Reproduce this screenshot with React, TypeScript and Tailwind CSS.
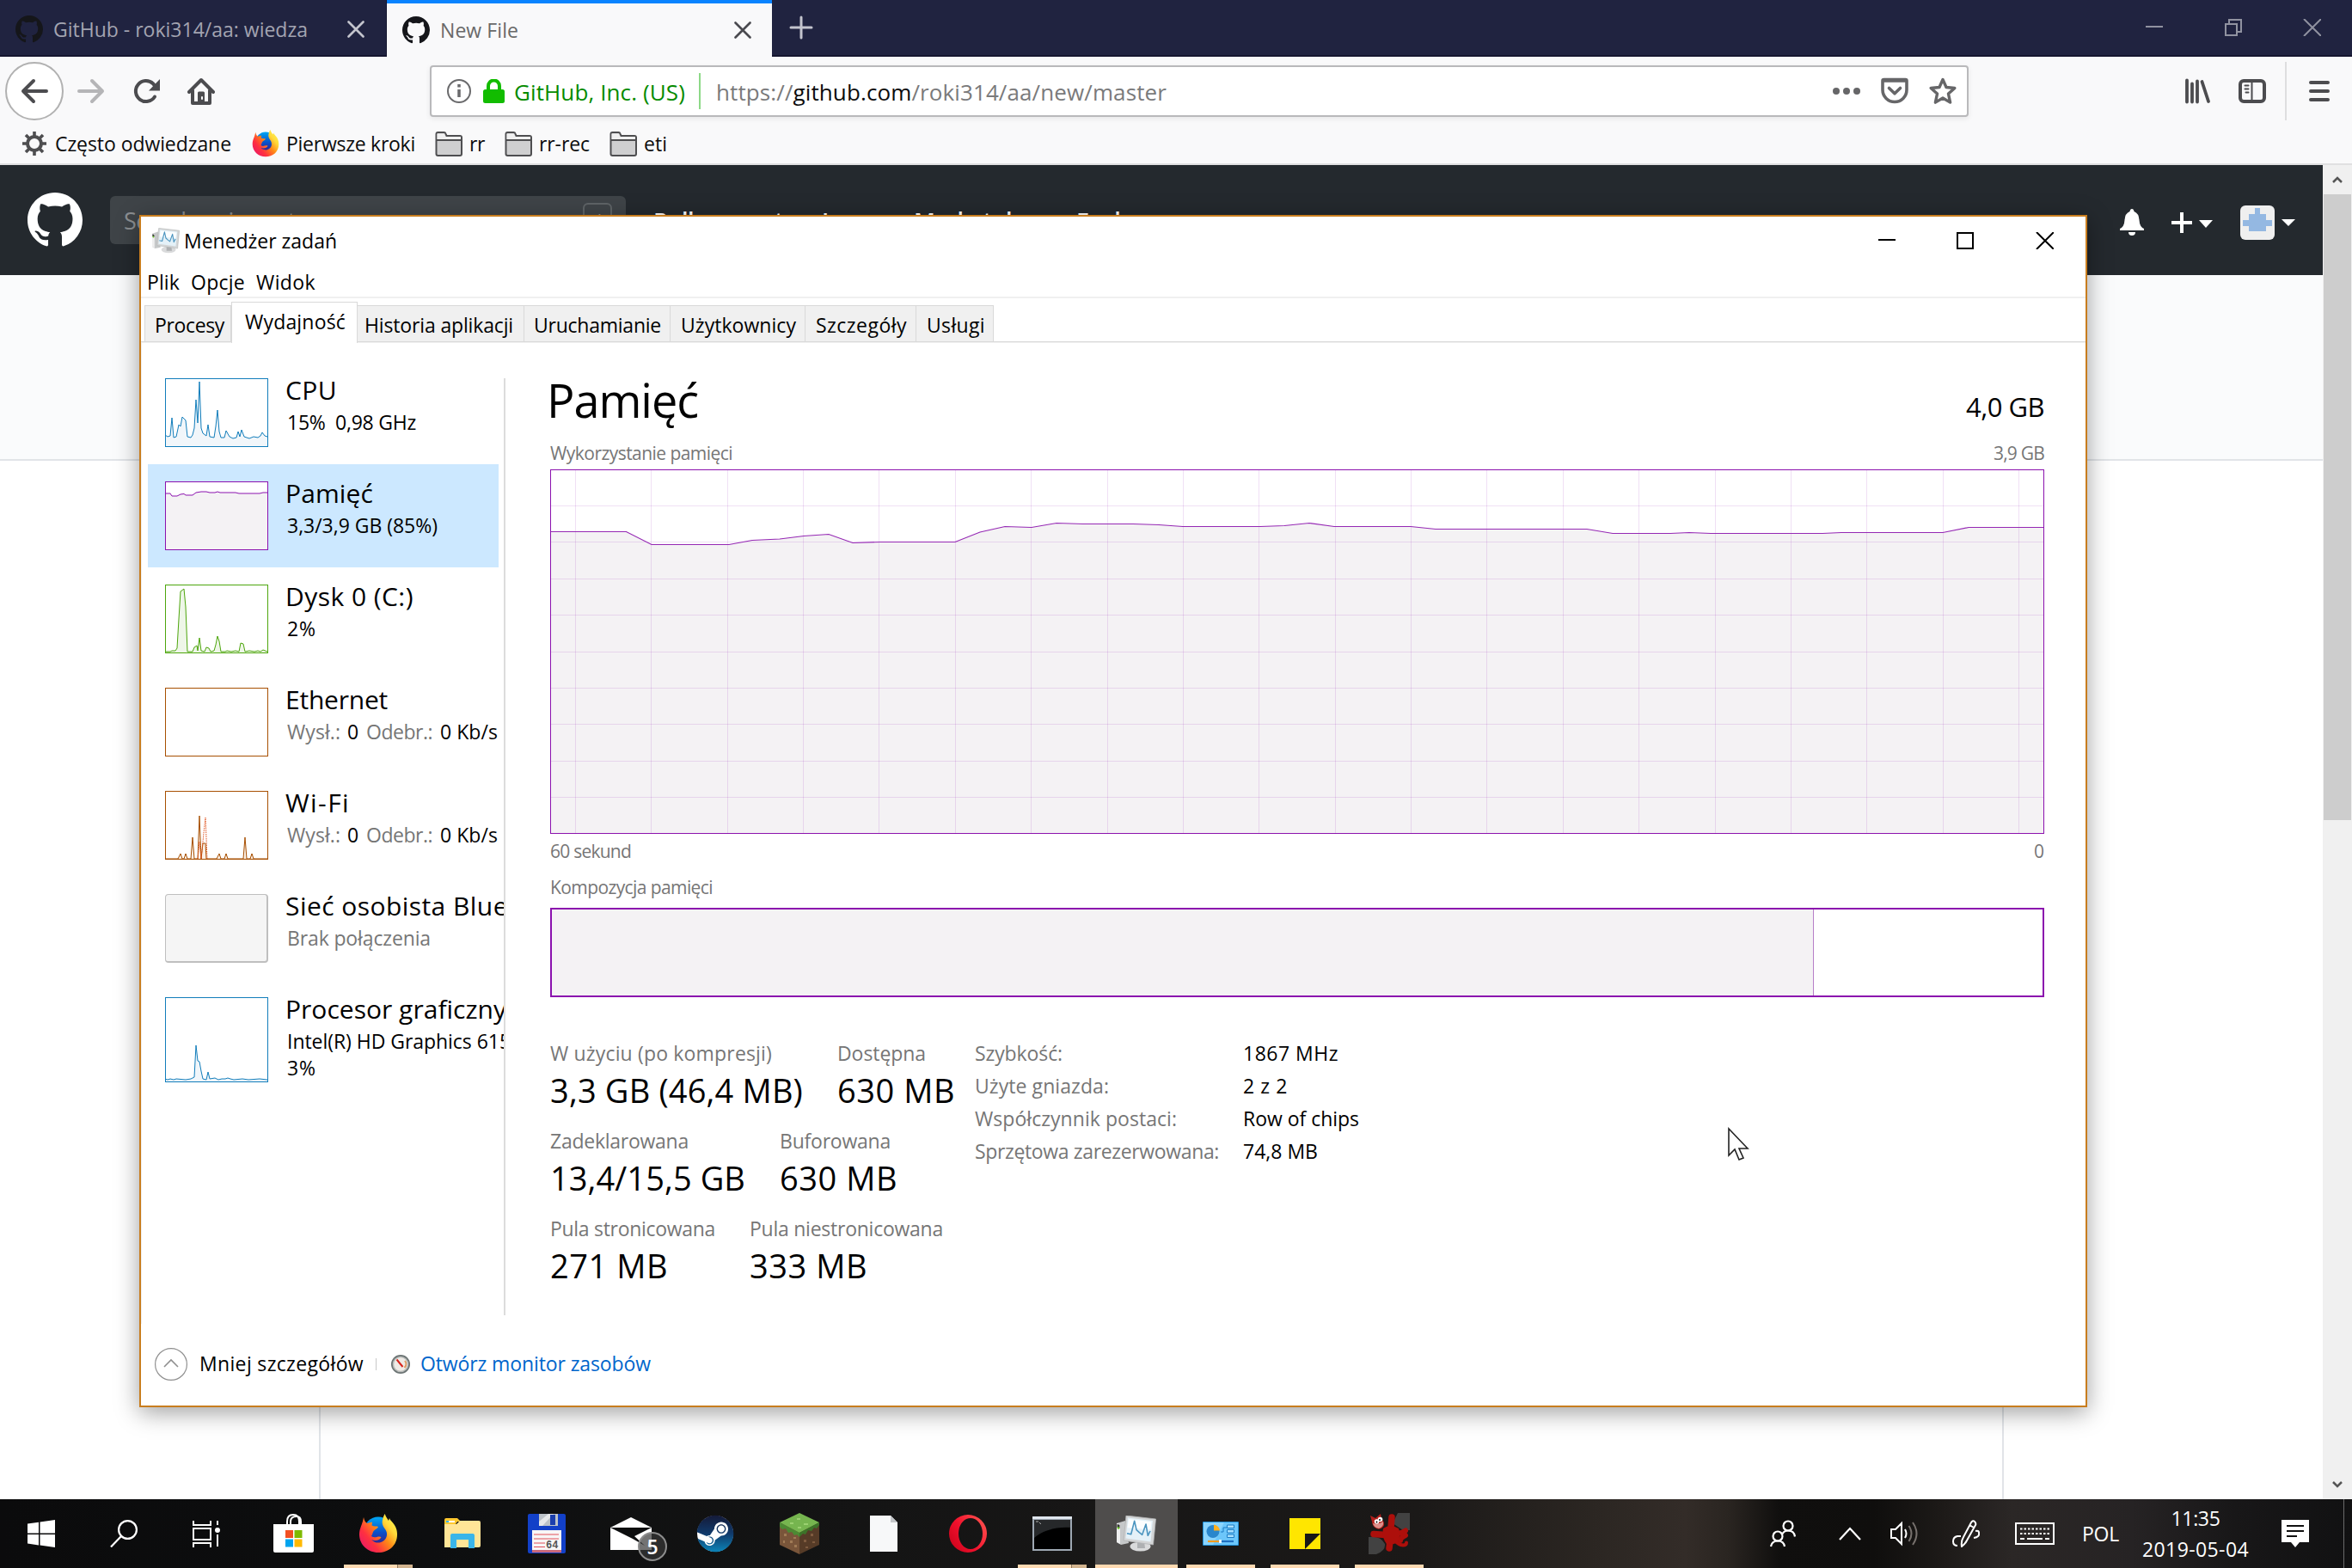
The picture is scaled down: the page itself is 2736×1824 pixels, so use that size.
import { useLayoutEffect, useRef, useState } from "react";
import type { ReactNode } from "react";
import { FaSteam } from "react-icons/fa";

/* Single line of text whose tracking is adjusted so that it spans `w` pixels. */
function Fit({ w, className = "", children }: { w: number; className?: string; children: ReactNode }) {
  const ref = useRef<HTMLSpanElement>(null);
  const [ls, setLs] = useState(0);
  useLayoutEffect(() => {
    const el = ref.current;
    if (!el) return;
    const n = (el.textContent || "").length;
    const natural = el.getBoundingClientRect().width - ls * n;
    setLs((w - natural) / n);
  }, [w]);
  return (
    <span ref={ref} className={"inline-block shrink-0 whitespace-pre " + className} style={{ letterSpacing: ls }}>
      {children}
    </span>
  );
}

/* ---------- browser chrome ---------- */

function GitHubMark({ className }: { className: string }) {
  return (
    <svg className={"shrink-0 " + className} viewBox="0 0 16 16" fill="currentColor">
      <path fillRule="evenodd" d="M8 0C3.58 0 0 3.58 0 8c0 3.54 2.29 6.53 5.47 7.59.4.07.55-.17.55-.38 0-.19-.01-.82-.01-1.49-2.01.37-2.53-.49-2.69-.94-.09-.23-.48-.94-.82-1.13-.28-.15-.68-.52-.01-.53.63-.01 1.08.58 1.23.82.72 1.21 1.87.87 2.33.66.07-.52.28-.87.51-1.07-1.78-.2-3.64-.89-3.64-3.95 0-.87.31-1.59.82-2.15-.08-.2-.36-1.02.08-2.12 0 0 .67-.21 2.2.82.64-.18 1.32-.27 2-.27.68 0 1.36.09 2 .27 1.53-1.04 2.2-.82 2.2-.82.44 1.1.16 1.92.08 2.12.51.56.82 1.27.82 2.15 0 3.07-1.87 3.75-3.65 3.95.29.25.54.73.54 1.48 0 1.07-.01 1.93-.01 2.2 0 .21.15.46.55.38A8.013 8.013 0 0 0 16 8c0-4.42-3.58-8-8-8z" />
    </svg>
  );
}

function Cross({ className }: { className: string }) {
  return (
    <svg className={"h-5 w-5 " + className} viewBox="0 0 20 20" fill="none" stroke="currentColor" strokeWidth="2.6" strokeLinecap="round">
      <path d="M1.5 1.5l17 17M18.5 1.5l-17 17" />
    </svg>
  );
}

function TabBar() {
  return (
    <div className="flex h-[66px] border-b-2 border-[#15162f] bg-[#202340]">
      <div className="flex h-16 w-[450px] items-center border-r border-[#15162f] pl-[18px] pt-1">
        <GitHubMark className="h-8 w-8 text-[#15161a]" />
        <Fit w={296} className="ml-3 text-[23px] text-[#a3a4b1]">GitHub - roki314/aa: wiedza</Fit>
        <Cross className="ml-[46px] text-[#c3c4cd]" />
      </div>
      <div className="relative flex h-[66px] w-[448px] items-center border-t-4 border-[#0a84ff] bg-[#f9f9fa] pl-[18px]">
        <GitHubMark className="h-8 w-8 text-[#15161a]" />
        <Fit w={91} className="ml-3 text-[23px] text-[#696969]">New File</Fit>
        <Cross className="ml-[251px] text-[#4a4a4f]" />
      </div>
      <svg className="ml-5 mt-[18px] h-7 w-7" viewBox="0 0 28 28" stroke="#c3c4cd" strokeWidth="3" strokeLinecap="round">
        <path d="M14 2v24M2 14h24" />
      </svg>
      <svg className="ml-auto mr-9 mt-[22px] h-5 w-[204px]" viewBox="0 0 204 20" fill="none" stroke="#9092a0" strokeWidth="2">
        <path d="M0 9h20" />
        <path d="M93 6h13v13h-13zM97 5V1h14v14h-4" />
        <path d="M184 0l20 20M204 0l-20 20" />
      </svg>
    </div>
  );
}

function NavBar() {
  return (
    <div className="flex h-20 items-center bg-[#f9f9fa]">
      <div className="ml-1.5 flex h-[68px] w-[68px] shrink-0 items-center justify-center rounded-full border-2 border-[#b1b1b1] bg-white">
        <svg className="h-8 w-8" viewBox="0 0 32 32" fill="none" stroke="#4c4c4f" strokeWidth="4" strokeLinecap="round" strokeLinejoin="round">
          <path d="M30 16H3M15 4L3 16l12 12" />
        </svg>
      </div>
      <svg className="ml-4 h-8 w-8 shrink-0" viewBox="0 0 32 32" fill="none" stroke="#b5b5b7" strokeWidth="4" strokeLinecap="round" strokeLinejoin="round">
        <path d="M2 16h27M17 4l12 12-12 12" />
      </svg>
      <svg className="ml-8 h-8 w-8 shrink-0" viewBox="0 0 32 32" fill="none" stroke="#4c4c4f" strokeWidth="4" strokeLinecap="round">
        <path d="M26 22.500A12 12 0 1 1 24 7.200L27 11" />
        <path d="M32 2v13.500H19z" fill="#4c4c4f" stroke="none" />
      </svg>
      <svg className="ml-8 h-8 w-8 shrink-0" viewBox="0 0 32 32" fill="none" stroke="#4c4c4f" strokeWidth="4" strokeLinecap="round" strokeLinejoin="round">
        <path d="M2 17L16 3l14 14M6 15v15h20V15" />
        <path d="M12 31V18q0-1.500 1.500-1.500h5q1.500 0 1.500 1.500v13z" fill="#4c4c4f" stroke="none" />
        <path d="M17 23v2" stroke="#f9f9fa" strokeWidth="2" />
      </svg>
      <div className="ml-[250px] flex h-[60px] w-[1790px] shrink-0 items-center rounded border-2 border-[#b9b9bb] bg-white shadow-[0_2px_6px_rgba(0,0,0,0.08)]">
        <svg className="ml-[18px] h-7 w-7" viewBox="0 0 28 28" fill="none" stroke="#6a6a6c" strokeWidth="2">
          <circle cx="14" cy="14" r="13" />
          <path d="M14 12v9M14 6v3.500" strokeWidth="3.500" />
        </svg>
        <svg className="ml-3.5 h-7 w-[25px]" viewBox="0 0 25 28">
          <path d="M6 13V8a6.500 6.500 0 0 1 13 0v5" fill="none" stroke="#12bc00" strokeWidth="4" />
          <rect y="12" width="25" height="16" rx="2.500" fill="#12bc00" />
        </svg>
        <Fit w={199} className="ml-[11px] pt-0.5 text-[26px] text-[#058b00]">GitHub, Inc. (US)</Fit>
        <div className="ml-4 h-[42px] w-0.5 bg-[#8dd987]" />
        <Fit w={524} className="ml-[18px] pt-0.5 text-[26px] text-[#7a7a7b]">
          https://<span className="text-[#0c0c0d]">github.com</span>/roki314/aa/new/master
        </Fit>
        <svg className="ml-auto h-8 w-8" viewBox="0 0 32 32" fill="#666668">
          <circle cx="4" cy="16" r="4" /><circle cx="16" cy="16" r="4" /><circle cx="28" cy="16" r="4" />
        </svg>
        <svg className="ml-6 h-8 w-8" viewBox="0 0 32 32" fill="none" stroke="#666668" strokeWidth="3.600" strokeLinecap="round" strokeLinejoin="round">
          <path d="M2 4q0-1.500 1.500-1.500h25Q30 2.500 30 4v10.500a14 14 0 0 1-28 0z" />
          <path d="M9.500 12.500l6.500 6.300 6.500-6.300" />
          <path d="M3 4h26" />
        </svg>
        <svg className="ml-6 mr-3 h-8 w-8" viewBox="0 0 32 32" fill="none" stroke="#666668" strokeWidth="3.400" strokeLinejoin="round">
          <path d="M16 2.500l4 9 9.800 1-7.300 6.600 2.100 10L16 24l-8.600 5.100 2.100-10-7.300-6.600 9.800-1z" />
        </svg>
      </div>
      <svg className="ml-auto h-8 w-8" viewBox="0 0 32 32" stroke="#4c4c4f" strokeWidth="3.800" strokeLinecap="round">
        <path d="M4 3.500v25M10 7.500v21M16 4.500v24M21.500 5l7.500 23" />
      </svg>
      <svg className="ml-8 h-8 w-8" viewBox="0 0 32 32" fill="none" stroke="#4c4c4f" strokeLinecap="round">
        <rect x="2" y="4" width="28" height="24" rx="4" strokeWidth="4" />
        <path d="M15.500 4v24" strokeWidth="2" />
        <path d="M7.500 9.500h4M7.500 13.500h4M8.500 17.500h3" strokeWidth="2" />
      </svg>
      <div className="ml-[22px] h-[68px] w-0.5 bg-[#dededf]" />
      <svg className="ml-[26px] mr-[26px] h-6 w-6" viewBox="0 0 24 24" stroke="#4c4c4f" strokeWidth="4" strokeLinecap="round">
        <path d="M2 2h20M2 12h20M2 22h20" />
      </svg>
    </div>
  );
}

function FirefoxIcon({ className }: { className: string }) {
  return (
    <svg className={className} viewBox="0 0 44 46">
      <defs>
        <linearGradient id="ffFlame" x1="0.95" y1="0.1" x2="0.1" y2="0.8">
          <stop offset="0" stopColor="#fff44f" /><stop offset="0.25" stopColor="#ffd93a" /><stop offset="0.5" stopColor="#ff8a16" />
          <stop offset="0.8" stopColor="#ff3040" /><stop offset="1" stopColor="#f0205c" />
        </linearGradient>
        <linearGradient id="ffGlobe" x1="0.5" y1="0" x2="0.5" y2="1">
          <stop offset="0" stopColor="#00a8f4" /><stop offset="0.55" stopColor="#0a4fc8" /><stop offset="1" stopColor="#3a1f8a" />
        </linearGradient>
      </defs>
      <circle cx="22" cy="20" r="16.500" fill="url(#ffGlobe)" />
      <path d="M5 4C6 8 7 10 9 11L15 9.500 14.500 13.500C17 15 20 14 22 15 21 18 17 18 16 21 15 24 15 24 14 26 18 29 22 25 25.500 27 24 31 18 32 14 30 20 37 31 33 32 25 33 17 25 16 27 7 27.500 4 28.500 2 29.700 0 31 4 33 6 34 8L35 5C36 9 44 12 44 24 44 37 34 45 22 45 10 45 0 36 0 24 0 16 4 12 5 4z" fill="url(#ffFlame)" />
    </svg>
  );
}

function Folder() {
  return (
    <svg className="h-8 w-8 shrink-0" viewBox="0 0 32 32" fill="#cfcfd0" stroke="#4e4e50" strokeWidth="2">
      <path d="M1.500 28V5q0-2 2-2h7q1.500 0 2 1.500L13.500 7H29q2 0 2 2v19q0 2-2 2H3.500q-2 0-2-2z" />
      <path d="M2.500 11V4.500h8L12.500 8H30v3z" fill="#f0f0f0" stroke="none" />
      <path d="M1.500 12h29" />
    </svg>
  );
}

function Bookmarks() {
  return (
    <div className="flex h-[46px] items-center border-b-2 border-[#e0e0e1] bg-[#f9f9fa] pb-0.5 text-[23px] text-[#0c0c0d]">
      <svg className="ml-6 h-8 w-8" viewBox="0 0 32 32" fill="none" stroke="#4e4e50">
        <circle cx="16" cy="16" r="8" strokeWidth="4" />
        <path d="M16 2v5M16 25v5M2 16h5M25 16h5M6 6l4 4M22 22l4 4M26 6l-4 4M10 22l-4 4" strokeWidth="3.600" />
      </svg>
      <Fit w={205} className="ml-2">Często odwiedzane</Fit>
      <FirefoxIcon className="ml-6 h-8 w-8" />
      <Fit w={150} className="ml-2">Pierwsze kroki</Fit>
      <div className="ml-[23px] flex"><Folder /></div>
      <Fit w={18} className="ml-2">rr</Fit>
      <div className="ml-[23px] flex"><Folder /></div>
      <Fit w={59} className="ml-2">rr-rec</Fit>
      <div className="ml-[23px] flex"><Folder /></div>
      <Fit w={27} className="ml-2">eti</Fit>
    </div>
  );
}

function GitHubPage() {
  return (
    <div className="flex h-[1552px] bg-white">
      <div className="flex w-[2702px] flex-col">
        <div className="flex h-32 shrink-0 items-center bg-[#24292e]">
          <GitHubMark className="ml-8 h-16 w-16 text-white" />
          <div className="ml-8 flex h-14 w-[600px] shrink-0 items-center rounded-md bg-[#3f4448] pl-4">
            <Fit w={236} className="pt-0.5 text-[27px] text-[#8c8f92]">Search or jump to…</Fit>
            <div className="ml-auto mr-4 flex h-10 w-[34px] items-center justify-center rounded-md border-2 border-[#5f6467] text-[20px] text-[#8c8f92]">/</div>
          </div>
          <div className="ml-8 mt-[3px] flex text-[27px] font-semibold text-white">
            <div className="w-[196px]"><Fit w={164}>Pull requests</Fit></div>
            <div className="w-[107px]"><Fit w={75}>Issues</Fit></div>
            <div className="w-[189px]"><Fit w={157}>Marketplace</Fit></div>
            <div><Fit w={92}>Explore</Fit></div>
          </div>
          <svg className="ml-auto mt-1.5 h-8 w-7 shrink-0" viewBox="0 0 28 32" fill="#fff">
            <path d="M14 0q2 0 2.500 3Q22 5 22.500 13q.5 8 5.500 10v2H0v-2q5-2 5.500-10Q6 5 11.500 3 12 0 14 0zM10 27h8q0 4-4 4t-4-4z" />
          </svg>
          <svg className="ml-8 mt-1.5 h-6 w-12 shrink-0" viewBox="0 0 48 24" fill="#fff">
            <path d="M10 0h4v10h10v4H14v10h-4V14H0v-4h10zM32 9h16l-8 9z" />
          </svg>
          <svg className="ml-8 mt-1.5 h-10 w-16 shrink-0" viewBox="0 0 64 40">
            <rect width="40" height="40" rx="6" fill="#efefef" />
            <path d="M17 3h6v7h7v7h7v7h-7v6H10v-6H3v-7h7v-7h7z" fill="#94b8e2" />
            <path d="M48 16h16l-8 8z" fill="#fff" />
          </svg>
          <div className="w-8 shrink-0" />
        </div>
        <div className="h-[216px] shrink-0 border-b-2 border-[#e1e4e8] bg-[#fafbfc]" />
        <div className="mx-[371px] flex-1 border-x-2 border-[#e1e4e8]" />
      </div>
      <div className="flex w-[34px] flex-col items-center bg-[#f0f0f0]">
        <svg className="my-[13px] h-2 w-3" viewBox="0 0 12 8" fill="none" stroke="#555" strokeWidth="2.500"><path d="M1 7l5-5 5 5" /></svg>
        <div className="h-[728px] w-8 bg-[#cdcdcd]" />
        <svg className="mb-[13px] mt-auto h-2 w-3" viewBox="0 0 12 8" fill="none" stroke="#555" strokeWidth="2.500"><path d="M1 1l5 5 5-5" /></svg>
      </div>
    </div>
  );
}

/* ---------- task manager ---------- */

function MonitorIcon({ className }: { className: string }) {
  return (
    <svg className={className} viewBox="0 0 46 42">
      <path d="M0 9l10-3 4 26-9 2-5-3z" fill="#c6c8c9" />
      <path d="M0 9l4 1v23l-4-2z" fill="#efefef" />
      <path d="M.5 10l3 .8v4l-3-1z" fill="#333" />
      <circle cx="2" cy="14.500" r="1.300" fill="#63c51f" />
      <ellipse cx="27.500" cy="36" rx="12" ry="5.500" fill="#d9dadb" />
      <path d="M24 30h8l1 8h-9z" fill="#aeb0b2" />
      <path d="M11 0l34.500 4-3 30L8 29z" fill="#d3d5d6" stroke="#b2b4b5" strokeWidth="0.800" />
      <path d="M13 2.500l29 3.500-2.500 24.500-29-4z" fill="#e4f1f8" />
      <path d="M14 4l26.500 3.200-1 9-27-2z" fill="#fbfdfe" />
      <path d="M12 20.700l4.700 1 4-15.400L23 16.700l3.300 3 3.400 2.600L34 10l2.300 13.300L39 18" fill="none" stroke="#4a94bf" strokeWidth="1.600" strokeLinejoin="round" />
    </svg>
  );
}

const TABS = [
  { label: "Procesy", box: "w-[101px] pl-[11px]", w: 81 },
  { label: "Wydajność", box: "w-[147px] pl-[15px]", w: 117, active: true },
  { label: "Historia aplikacji", box: "w-[194px] pl-2", w: 173 },
  { label: "Uruchamianie", box: "w-[170px] pl-[11px]", w: 148 },
  { label: "Użytkownicy", box: "w-[157px] pl-3", w: 134 },
  { label: "Szczegóły", box: "w-[129px] pl-3", w: 106 },
  { label: "Usługi", box: "w-[90px] pl-3", w: 68 },
];

const CPU = "0,66 3,68 6,67 8,46 10,69 13,68 16,54 18,56 20,45 24,49 26,68 30,69 32,66 34,58 36,25 38,52 40,4 42,58 44,64 48,67 50,54 52,68 57,69 59,56 61,37 63,62 65,69 69,69 71,61 75,68 79,70 83,69 85,62 87,68 89,60 92,68 98,70 103,68 108,69 111,67 113,63 116,67 119,68";
const MEM = "0,14 6,14 8,17 14,17 18,15 22,14.500 24,16 32,16 36,13 42,12 48,12 52,13 58,13 61,12 64,13 82,13 86,14 110,14 114,13 119,13";
const DISK = "0,78 6,78 8,77 12,77 14,74 16,40 18,8 22,5 24,26 26,78 32,78 34,73 37,71 38,77 40,62 42,77 46,78 48,73 51,74 53,78 57,77 59,70 61,60 63,66 65,78 70,78 72,77 77,78 82,77 86,78 88,68 91,69 93,78 98,77 104,78 108,77 111,78 114,76 119,78";
const WIFI = "0,79 15,79 18,73 20,79 22,79 24,73 26,79 30,79 32,54 34,79 38,79 40,29 42,79 44,61 47,61 48,79 60,79 63,73 65,79 69,79 71,73 73,79 91,79 93,54 95,79 99,79 101,73 103,79 119,79";
const GPU = "0,95 3,96 6,95 10,96 13,95 24,96 30,95 34,93 36,56 38,74 40,75 42,86 44,95 48,96 50,87 52,95 58,94 62,96 66,95 70,95 73,94 76,95 80,96 90,95 97,96 110,95 119,96";

function Thumb({ color, fill, points, h = 80, extra }: { color: string; fill: string; points?: string; h?: number; extra?: ReactNode }) {
  return (
    <svg width="120" height={h} viewBox={`0 0 120 ${h}`} className="shrink-0">
      <rect x="0.500" y="0.500" width="119" height={h - 1} fill="#fff" stroke={color} />
      {points && <polygon points={`0.500,${h - 1} ${points} 119,${h - 1}`} fill={fill} />}
      {points && <polyline points={points} fill="none" stroke={color} strokeWidth="1" />}
      {extra}
      <rect x="0.500" y="0.500" width="119" height={h - 1} fill="none" stroke={color} />
    </svg>
  );
}

function Side({ thumb, title, w, active, children }: { thumb: ReactNode; title: string; w: number; active?: boolean; children: ReactNode }) {
  return (
    <div className={"flex h-[120px] w-[408px] shrink-0 pl-5 pt-5 " + (active ? "bg-[#cce8ff]" : "")}>
      {thumb}
      <div className="ml-5 flex flex-col">
        <Fit w={w} className="self-start text-[30px] leading-[27px]">{title}</Fit>
        <div className="ml-0.5 mt-[9px] flex flex-col text-[23px] leading-[31px]">{children}</div>
      </div>
    </div>
  );
}

function Traffic() {
  return (
    <div className="flex">
      <Fit w={62} className="mr-[8px] text-[#767676]">Wysł.:</Fit>
      <Fit w={14}>0</Fit>
      <Fit w={77} className="ml-[8px] text-[#767676]">Odebr.:</Fit>
      <Fit w={67} className="ml-[9px]">0 Kb/s</Fit>
    </div>
  );
}

function Sidebar() {
  return (
    <div className="flex w-[422px] flex-col overflow-hidden pl-2 pt-[21px] text-black">
      <Side title="CPU" w={60} thumb={<Thumb color="#117dbb" fill="#f1f6fa" points={CPU} />}>
        <Fit w={150} className="self-start">15%  0,98 GHz</Fit>
      </Side>
      <Side title="Pamięć" w={102} active thumb={<Thumb color="#8b12ae" fill="#f4f2f4" points={MEM} />}>
        <Fit w={175} className="self-start">3,3/3,9 GB (85%)</Fit>
      </Side>
      <Side title="Dysk 0 (C:)" w={149} thumb={<Thumb color="#4da60c" fill="#eef6e8" points={DISK} />}>
        <Fit w={34} className="self-start">2%</Fit>
      </Side>
      <Side title="Ethernet" w={119} thumb={<Thumb color="#a74f01" fill="#fff" />}>
        <Traffic />
      </Side>
      <Side
        title="Wi-Fi"
        w={75}
        thumb={
          <Thumb
            color="#a74f01"
            fill="#fbf0e6"
            points={WIFI}
            extra={<path d="M38 79l2-20 2 20 3-30 2-18 2 48" fill="none" stroke="#e0531f" strokeDasharray="1.500 1" />}
          />
        }
      >
        <Traffic />
      </Side>
      <Side
        title="Sieć osobista Bluetooth"
        w={337}
        thumb={<div className="h-20 w-[120px] shrink-0 rounded-sm border border-b-2 border-r-2 border-[#bfbfbf] bg-[#f5f5f5]" />}
      >
        <Fit w={167} className="self-start text-[#767676]">Brak połączenia</Fit>
      </Side>
      <Side title="Procesor graficzny 0" w={282} thumb={<Thumb color="#117dbb" fill="#f1f6fa" points={GPU} h={99} />}>
        <Fit w={260} className="self-start">Intel(R) HD Graphics 615</Fit>
        <Fit w={34} className="self-start">3%</Fit>
      </Side>
    </div>
  );
}

const USAGE =
  "0,72.500 88.500,72.500 118,87.500 208,87.500 235,82.500 267,81 295,77.500 324,75.500 352,85.500 384,84.500 471,84.500 500,73 529,66.500 560,67.500 589,62.500 620,63.500 678,63.500 708,64.500 736,66.500 826,66.500 854,65.500 883,62.500 912,66.500 1001,66.500 1030,69.500 1206,69.500 1236,74.500 1303,74.500 1325,73.500 1350,74.500 1480,74.500 1502,73.500 1620,73.500 1650,67.500 1738,67.500";

function UsageChart() {
  const cols = Array.from({ length: 20 }, (_, i) => Math.round(29 + i * 88.37) + 0.5);
  const rows = Array.from({ length: 9 }, (_, i) => Math.floor(42.4 * (i + 1)) + 0.5);
  return (
    <svg width="1738" height="424" viewBox="0 0 1738 424">
      <rect width="1738" height="424" fill="#fff" />
      <polygon points={`0,424 ${USAGE} 1738,424`} fill="#f4f2f4" />
      <g stroke="#8b12ae" strokeOpacity="0.13">
        {cols.map((x) => <path key={x} d={`M${x} 0V424`} />)}
        {rows.map((y) => <path key={y} d={`M0 ${y}H1738`} />)}
      </g>
      <polyline points={USAGE} fill="none" stroke="#9528b4" strokeWidth="1.200" />
      <rect x="0.500" y="0.500" width="1737" height="423" fill="none" stroke="#8b12ae" />
    </svg>
  );
}

function Stat({ label, lw, value, vw, box }: { label: string; lw: number; value: string; vw: number; box: string }) {
  return (
    <div className={"shrink-0 " + box}>
      <div className="h-9 text-[23px] leading-9 text-[#767676]"><Fit w={lw}>{label}</Fit></div>
      <div className="h-[50px] text-[38px] leading-[50px]"><Fit w={vw}>{value}</Fit></div>
    </div>
  );
}

function MemoryPanel() {
  const specs = [
    { k: "Szybkość:", kw: 102, v: "1867 MHz", vw: 111 },
    { k: "Użyte gniazda:", kw: 156, v: "2 z 2", vw: 52 },
    { k: "Współczynnik postaci:", kw: 235, v: "Row of chips", vw: 135 },
    { k: "Sprzętowa zarezerwowana:", kw: 284, v: "74,8 MB", vw: 87 },
  ];
  return (
    <div className="ml-[52px] flex w-[1738px] flex-col pt-[39px] text-black">
      <div className="flex h-[54px] items-end justify-between">
        <Fit w={176} className="-ml-1 text-[54px] leading-[54px]">Pamięć</Fit>
        <Fit w={91} className="text-[31px] leading-[38px]">4,0 GB</Fit>
      </div>
      <div className="mt-3.5 flex h-10 items-center justify-between pt-1 text-[21px] text-[#767676]">
        <Fit w={212}>Wykorzystanie pamięci</Fit>
        <Fit w={59}>3,9 GB</Fit>
      </div>
      <UsageChart />
      <div className="flex h-10 items-center justify-between pt-0.5 text-[21px] text-[#767676]">
        <Fit w={94}>60 sekund</Fit>
        <span>0</span>
      </div>
      <div className="mb-0.5 flex h-11 items-center pt-0.5 text-[21px] text-[#767676]">
        <Fit w={189}>Kompozycja pamięci</Fit>
      </div>
      <div className="flex h-[104px] border-2 border-[#8b12ae]">
        <div className="w-[1468px] border-r border-[#b77fc8] bg-[#f4f2f4]" />
      </div>
      <div className="mt-[47px] flex">
        <div className="flex w-[494px] flex-col gap-4">
          <div className="flex">
            <Stat label="W użyciu (po kompresji)" lw={258} value="3,3 GB (46,4 MB)" vw={294} box="w-[334px]" />
            <Stat label="Dostępna" lw={103} value="630 MB" vw={137} box="" />
          </div>
          <div className="flex">
            <Stat label="Zadeklarowana" lw={161} value="13,4/15,5 GB" vw={227} box="w-[267px]" />
            <Stat label="Buforowana" lw={129} value="630 MB" vw={137} box="" />
          </div>
          <div className="flex">
            <Stat label="Pula stronicowana" lw={192} value="271 MB" vw={137} box="w-[232px]" />
            <Stat label="Pula niestronicowana" lw={225} value="333 MB" vw={137} box="" />
          </div>
        </div>
        <div className="text-[23px] leading-[38px]">
          {specs.map((s) => (
            <div key={s.k} className="-mt-px mb-px flex h-[38px]">
              <div className="w-[312px] text-[#767676]"><Fit w={s.kw}>{s.k}</Fit></div>
              <Fit w={s.vw}>{s.v}</Fit>
            </div>
          ))}
        </div>
      </div>
    </div>
  );
}

function TaskManager() {
  return (
    <div className="absolute left-[162px] top-[250px] flex h-[1387px] w-[2266px] flex-col border-2 border-[#c87d1e] bg-white text-black shadow-[0_6px_26px_rgba(0,0,0,0.38)]">
      <div className="flex h-14 shrink-0 items-center pl-[13px]">
        <MonitorIcon className="h-[30px] w-8" />
        <Fit w={178} className="ml-[5px] text-[23px]">Menedżer zadań</Fit>
        <svg className="ml-auto mr-[37px] h-5 w-[204px]" viewBox="0 0 204 20" fill="none" stroke="#000" strokeWidth="2">
          <path d="M0 9h20M92 1h18v18H92z" />
          <path d="M184 0l20 20M204 0l-20 20" />
        </svg>
      </div>
      <div className="flex h-[39px] shrink-0 items-center border-b-2 border-[#f0f0f0] pl-[7px] pt-1 text-[23px]">
        <Fit w={38}>Plik</Fit>
        <Fit w={63} className="ml-[13px]">Opcje</Fit>
        <Fit w={69} className="ml-[13px]">Widok</Fit>
      </div>
      <div className="flex h-[51px] shrink-0 items-end border-b border-[#d9d9d9] pl-1 text-[23px] shadow-[0_1px_0_#f0f0f0]">
        {TABS.map((t) => (
          <div
            key={t.label}
            className={
              "flex shrink-0 items-center border-t border-[#d9d9d9] " +
              t.box +
              (t.active ? " relative -mb-0.5 h-[48px] border-x bg-white pb-0.5" : " h-[42px] border-r bg-[#f0f0f0] pt-1") +
              (t.label === "Procesy" ? " border-l" : "")
            }
          >
            <Fit w={t.w}>{t.label}</Fit>
          </div>
        ))}
      </div>
      <div className="mt-px flex h-[1141px] shrink-0 border-l border-[#f0f0f0]">
        <div className="-ml-px flex">
          <Sidebar />
        </div>
        <div className="mt-[41px] h-[1090px] w-[2px] shrink-0 bg-[#dcdcdc]" />
        <MemoryPanel />
      </div>
      <div className="flex flex-1 items-center pb-0.5 pl-4 text-[23px]">
        <svg className="h-[38px] w-[38px]" viewBox="0 0 38 38" fill="none" stroke="#8f8f8f">
          <circle cx="19" cy="19" r="18.400" strokeWidth="1.200" />
          <path d="M11 22l8-8 8 8" strokeWidth="1.600" />
        </svg>
        <Fit w={191} className="ml-[14px]">Mniej szczegółów</Fit>
        <div className="ml-[14px] h-[14px] w-px bg-[#c8c8c8]" />
        <svg className="ml-[16px] h-6 w-6" viewBox="0 0 24 24">
          <circle cx="12" cy="12" r="11" fill="#6c7474" />
          <circle cx="12" cy="12" r="9.300" fill="#b9bcba" />
          <circle cx="12" cy="12" r="7.800" fill="#efebe6" />
          <path d="M17 8a6 6 0 0 1-.5 8" fill="none" stroke="#dd9a62" strokeWidth="2" />
          <path d="M7.500 6.500l7 8.500" stroke="#d8231c" strokeWidth="2" />
        </svg>
        <Fit w={268} className="ml-[11px] text-[#0066cc]">Otwórz monitor zasobów</Fit>
      </div>
    </div>
  );
}

/* ---------- taskbar ---------- */

const APPS: { id: string; icon: ReactNode; bar?: "one" | "many" | "full" }[] = [
  {
    id: "store",
    icon: (
      <svg className="h-[46px] w-12" viewBox="0 0 48 46">
        <path d="M16 14V9q0-8 7-8t7 8v5M20 14V9q0-6 7-6 5 0 5 6v5" fill="none" stroke="#fff" strokeWidth="2" />
        <path d="M0 12h47v31q0 2-2 2H2q-2 0-2-2z" fill="#fff" />
        <path d="M14 19h9v9h-9z" fill="#f25022" /><path d="M24.500 19h9v9h-9z" fill="#7fba00" />
        <path d="M14 29.500h9v9h-9z" fill="#00a4ef" /><path d="M24.500 29.500h9v9h-9z" fill="#ffb900" />
      </svg>
    ),
  },
  { id: "firefox", bar: "many", icon: <FirefoxIcon className="h-[46px] w-11" /> },
  {
    id: "explorer",
    icon: (
      <svg className="h-[36px] w-[42px]" viewBox="0 0 42 36">
        <path d="M0 2q0-2 2-2h13l4 4h-4l-2 3H0z" fill="#ffc830" />
        <path d="M0 7h14l4-4h22q2 0 2 2v27q0 2-2 2H0z" fill="#ffe597" />
        <path d="M2 3h10v2H2z" fill="#fff" /><path d="M2 3h3v2H2z" fill="#3ab5e9" />
        <path d="M7 35V20q0-2 2-2h24q2 0 2 2v15h-7V25H14v10z" fill="#3ab5e9" />
      </svg>
    ),
  },
  {
    id: "floppy",
    icon: (
      <svg className="h-[46px] w-11" viewBox="0 0 44 46">
        <path d="M2 0h40q2 0 2 2v42q0 2-2 2H2q-2 0-2-2V2q0-2 2-2z" fill="#1240c8" />
        <path d="M13 0h22v14H13z" fill="#bcc2c8" /><path d="M13 9L24 0h6L17 14h-4z" fill="#e6e8ea" /><path d="M26 1h6v12h-6z" fill="#1b3fae" />
        <path d="M5 19h34v24H5z" fill="#f8f6f6" /><path d="M5 42h34v3H5z" fill="#c96a7c" />
        <path d="M7 24h29M7 29h29M7 34h13M7 38.500h13" stroke="#e0505a" strokeWidth="1.200" />
        <text x="21" y="40" fontSize="12" fontFamily="Liberation Mono" fontWeight="700" fill="#555">64</text>
      </svg>
    ),
  },
  {
    id: "mail",
    icon: (
      <div className="relative">
        <svg className="h-[38px] w-12" viewBox="0 0 48 38">
          <path d="M0 12L24 0l24 12v26H0z" fill="#fff" />
          <path d="M0 12h48L28 22l12 11-14-8z" fill="#0d0e0f" />
        </svg>
        <div className="absolute left-8 top-[17px] flex h-[34px] w-[34px] items-center justify-center rounded-full border-2 border-[#8d8d8d] bg-[#383838]/70 text-[23px] font-semibold text-white">5</div>
      </div>
    ),
  },
  {
    id: "steam",
    icon: (
      <div className="relative flex h-11 w-[46px] items-center justify-center">
        <svg className="absolute h-11 w-[46px]" viewBox="0 0 46 44">
          <defs>
            <linearGradient id="steamBg" x1="0" y1="0" x2="0" y2="1">
              <stop offset="0" stopColor="#151a38" /><stop offset="0.5" stopColor="#103a6b" /><stop offset="1" stopColor="#0c84b8" />
            </linearGradient>
          </defs>
          <circle cx="23" cy="22" r="21" fill="#fff" />
        </svg>
        <FaSteam className="relative h-11 w-11 fill-[url(#steamBg)]" />
      </div>
    ),
  },
  {
    id: "blocks",
    icon: (
      <svg className="h-12 w-[46px]" viewBox="0 0 46 48">
        <path d="M0 11l23 11v26L0 37z" fill="#79553a" /><path d="M46 11L23 22v26l23-11z" fill="#563b27" />
        <path d="M23 0l23 11-23 12L0 11z" fill="#76b54f" />
        <path d="M0 11l23 12v5l-3-3-3 1-3-4-4 1-3-5-4 1-3-3z" fill="#4c8a33" /><path d="M46 11L23 23v5l4-4 3 1 3-5 4 1 3-4 3 1 3-4z" fill="#3c7328" />
        <path d="M5 24h3v3H5zM12 32h3v3h-3zM4 32h2v3H4zM17 37h3v3h-3zM16 28h3v2h-3z" fill="#a07a55" />
        <path d="M28 31h3v3h-3zM36 24h3v3h-3zM38 33h3v2h-3zM30 39h3v2h-3z" fill="#7e5b3f" />
        <path d="M20 6h4v2h-4zM12 11h4v2h-4zM28 12h5v2h-5zM21 16h4v2h-4z" fill="#9ad070" />
      </svg>
    ),
  },
  {
    id: "document",
    icon: (
      <svg className="h-[42px] w-8" viewBox="0 0 32 42">
        <path d="M0 0h24l8 8v34H0z" fill="#f7f8f9" /><path d="M24 0v8h8z" fill="#c3c6c9" />
      </svg>
    ),
  },
  {
    id: "opera",
    icon: (
      <svg className="h-11 w-11" viewBox="0 0 44 44">
        <defs>
          <linearGradient id="operaRing" x1="0" y1="1" x2="1" y2="0.3">
            <stop offset="0" stopColor="#c40018" /><stop offset="0.5" stopColor="#f0102c" /><stop offset="1" stopColor="#ff4b4b" />
          </linearGradient>
        </defs>
        <path fillRule="evenodd" d="M22 0a22 22 0 1 1 0 44 22 22 0 0 1 0-44zM25 4c-8 0-14 8-14 18s6 18 14 18 14-8 14-18S33 4 25 4z" fill="url(#operaRing)" />
      </svg>
    ),
  },
  {
    id: "console",
    bar: "many",
    icon: (
      <svg className="h-10 w-[46px]" viewBox="0 0 46 40">
        <rect width="46" height="40" fill="#9ea8b3" /><path d="M0 0h46v3H0z" fill="#dfe6ee" />
        <path d="M2 4h42v34H2z" fill="#000" /><path d="M2 4h42v9C28 12 12 16 2 25z" fill="#26282a" />
        <path d="M4 6h3M8 7l2 2" stroke="#aaa" />
      </svg>
    ),
  },
  { id: "taskmgr", bar: "full", icon: <MonitorIcon className="h-[42px] w-[46px]" /> },
  {
    id: "panel",
    bar: "one",
    icon: (
      <svg className="h-7 w-[42px]" viewBox="0 0 42 28">
        <rect width="42" height="28" rx="1" fill="#1f8fd6" /><rect x="1" y="1" width="40" height="26" fill="#6cc6fa" />
        <path d="M1 1h24L12 27H1z" fill="#8bd4fc" />
        <circle cx="12" cy="11.500" r="7.500" fill="#2a86cc" /><path d="M13 10.500V3.500a7.500 7.500 0 0 1 7 7z" fill="#ffb01e" />
        <path d="M21 12h3V7h4" fill="none" stroke="#1c7cc4" />
        <path d="M28.500 4h8v3.500h-8zM28.500 9.500h8V13h-8zM28.500 15h8v3.500h-8z" fill="#a8e0ff" stroke="#1c7cc4" />
        <path d="M6 23h13" stroke="#f29b1d" strokeWidth="2.200" /><path d="M20 23h16" stroke="#1f6fc0" strokeWidth="2.200" />
        <path d="M19 21h3v4h-3z" fill="#e8f6ff" />
      </svg>
    ),
  },
  {
    id: "notes",
    bar: "one",
    icon: (
      <svg className="h-9 w-9" viewBox="0 0 36 36">
        <path d="M0 0h36v36H0z" fill="#ffe600" /><path d="M18 18h18L18 36z" fill="#171717" />
      </svg>
    ),
  },
  {
    id: "splat",
    bar: "one",
    icon: (
      <svg className="h-12 w-12" viewBox="0 0 48 48">
        <path d="M34 0h14v20l-8 0-12-8zM0 28q14-2 19 8 1 8-10 12H0z" fill="#424242" />
        <g stroke="#ad0f0b" strokeLinecap="round" fill="none">
          <path d="M27 5l-1 12M6 24.500l14 1M26 24l-2 17" strokeWidth="7.500" />
          <path d="M27 22q8 4 16-1.500M43 26q-6 3-6 6" strokeWidth="6" />
          <path d="M29 31q6 6 11 6.500 4 0 4-3" strokeWidth="4" />
        </g>
        <path d="M17 18q8-6 18 0 3 8-1 16-7 4-13 2-6-8-4-18z" fill="#ad0f0b" />
        <path d="M2 3l6 3 6-5 1 6q5 4 2 9-3 4-8 2-5-3-5-8z" fill="#b3201c" />
        <path d="M5 12q6 2 12-2 1 6-5 8-6-1-7-6z" fill="#dd8f8a" />
        <circle cx="9.500" cy="10" r="2.800" fill="#fff" /><circle cx="13.500" cy="7.500" r="2.800" fill="#fff" />
        <circle cx="9.500" cy="10.500" r="0.900" /><circle cx="13" cy="8" r="0.900" />
      </svg>
    ),
  },
];

function Taskbar() {
  return (
    <div className="flex h-20 bg-[linear-gradient(90deg,#0b0b0c_0px,#0d0e0f_500px,#141414_1000px,#1b1918_1650px,#2b2622_1850px,#332c28_1960px,#2a2521_2010px,#100f0e_2070px,#0f0e0d_2180px,#1d1a18_2260px,#2b2726_2340px,#262324_2480px,#181718_2600px,#111112_2736px)]">
      <div className="flex w-[293px] shrink-0 items-center pl-8">
        <svg className="h-8 w-8" viewBox="0 0 32 32" fill="#fff">
          <path d="M0 4.500l13-1.800V15.500H0zM14.500 2.500L32 0v15.500H14.500zM0 17h13v12.500L0 27.500zM14.500 17H32v15l-17.500-2.400z" />
        </svg>
        <svg className="ml-16 h-8 w-8" viewBox="0 0 32 32" fill="none" stroke="#fff" strokeWidth="2.200">
          <circle cx="20.500" cy="11.500" r="10.400" /><path d="M13 19L1 31.500" />
        </svg>
        <svg className="ml-16 h-8 w-8" viewBox="0 0 32 32" fill="none" stroke="#fff" strokeWidth="2">
          <path d="M1 10h20v13H1zM1 1v5h20V1M1 32v-5h20v5M29 1v5M29 17v14" /><circle cx="29" cy="12" r="3" fill="#fff" stroke="none" />
        </svg>
      </div>
      {APPS.map((a) => (
        <div key={a.id} className={"flex h-20 w-[98px] shrink-0 flex-col items-center " + (a.bar === "full" ? "px-px" : "")}>
          <div className={"flex h-[76px] w-full items-center justify-center pt-1 " + (a.bar === "full" ? "bg-[#4f4d4c]" : "")}>{a.icon}</div>
          {a.bar === "one" && <div className="h-1 w-20 bg-[#fed9b1]" />}
          {a.bar === "full" && <div className="h-1 w-full bg-[#fed9b1]" />}
          {a.bar === "many" && (
            <div className="flex h-1 w-20">
              <div className="w-[62px] bg-[#fed9b1]" />
              <div className="w-[18px] border-l border-[#8b765d] bg-[#d2b48f]" />
            </div>
          )}
        </div>
      ))}
      <div className="ml-auto flex shrink-0 items-center text-white">
        <svg className="h-8 w-[30px]" viewBox="0 0 30 32" fill="none" stroke="#fff" strokeWidth="2.200">
          <circle cx="21" cy="7" r="5.500" /><path d="M14 17q2-4.500 7-4.500 7 0 8 7" />
          <circle cx="9" cy="19" r="5.500" /><path d="M1 31q1-6.500 8-6.500t8 6.500" />
        </svg>
        <svg className="ml-[50px] h-4 w-[26px]" viewBox="0 0 26 16" fill="none" stroke="#fff" strokeWidth="2.200"><path d="M1 15L13 2l12 13" /></svg>
        <svg className="ml-[34px] h-8 w-[34px]" viewBox="0 0 34 32" fill="none" strokeWidth="2">
          <path d="M1 11h5l7-7v24l-7-7H1z" stroke="#fff" /><path d="M17 11q3 5 0 10" stroke="#fff" />
          <path d="M21.500 7q6 9 0 18M26 3q9 13 0 26" stroke="#77716d" />
        </svg>
        <svg className="ml-[38px] h-8 w-8" viewBox="0 0 32 32" fill="none" stroke="#fff" strokeWidth="2">
          <path d="M11 31q-1-6 2-11L22 3q2-3 4-1t1 4L17 24q-2 4-6 7zM20 6l5 3" />
          <path d="M10 19H6q-5 1-5 6t5 5M25 21q7-1 6-6 0-3-4-2" />
        </svg>
        <svg className="ml-[41px] h-[26px] w-[46px]" viewBox="0 0 46 26" fill="none" stroke="#fff" strokeWidth="2">
          <rect x="1" y="1" width="44" height="24" />
          <path d="M6 7.500h34M6 13h34" strokeDasharray="2.500 2" /><path d="M6 19h5M14 19h18M35 19h5" />
        </svg>
        <Fit w={43} className="ml-[32px] text-[23px]">POL</Fit>
        <div className="ml-[26px] flex w-[126px] flex-col items-center text-[23px] leading-[36px]">
          <Fit w={57}>11:35</Fit>
          <Fit w={124}>2019-05-04</Fit>
        </div>
        <svg className="ml-[37px] h-8 w-8" viewBox="0 0 32 32">
          <path d="M0 0h32v26H21l-5 6-5-6H0z" fill="#fff" /><path d="M6 7h20M6 13h20M6 19h12" stroke="#111" strokeWidth="2" />
        </svg>
        <div className="ml-[40px] mr-[9px] h-20 w-px bg-[#6a6a6a]" />
      </div>
    </div>
  );
}

export default function App() {
  return (
    <div className="relative flex h-[1824px] w-[2736px] flex-col overflow-hidden bg-white font-['Open_Sans','Noto_Sans',sans-serif]">
      <TabBar />
      <NavBar />
      <Bookmarks />
      <GitHubPage />
      <Taskbar />
      <TaskManager />
      <svg className="absolute left-[2009px] top-[1311px] h-10 w-7" viewBox="0 0 28 40">
        <path d="M2 2v31l7-7 5 12 5-2-5-11h10z" fill="#fff" stroke="#222" strokeWidth="1.600" />
      </svg>
    </div>
  );
}
